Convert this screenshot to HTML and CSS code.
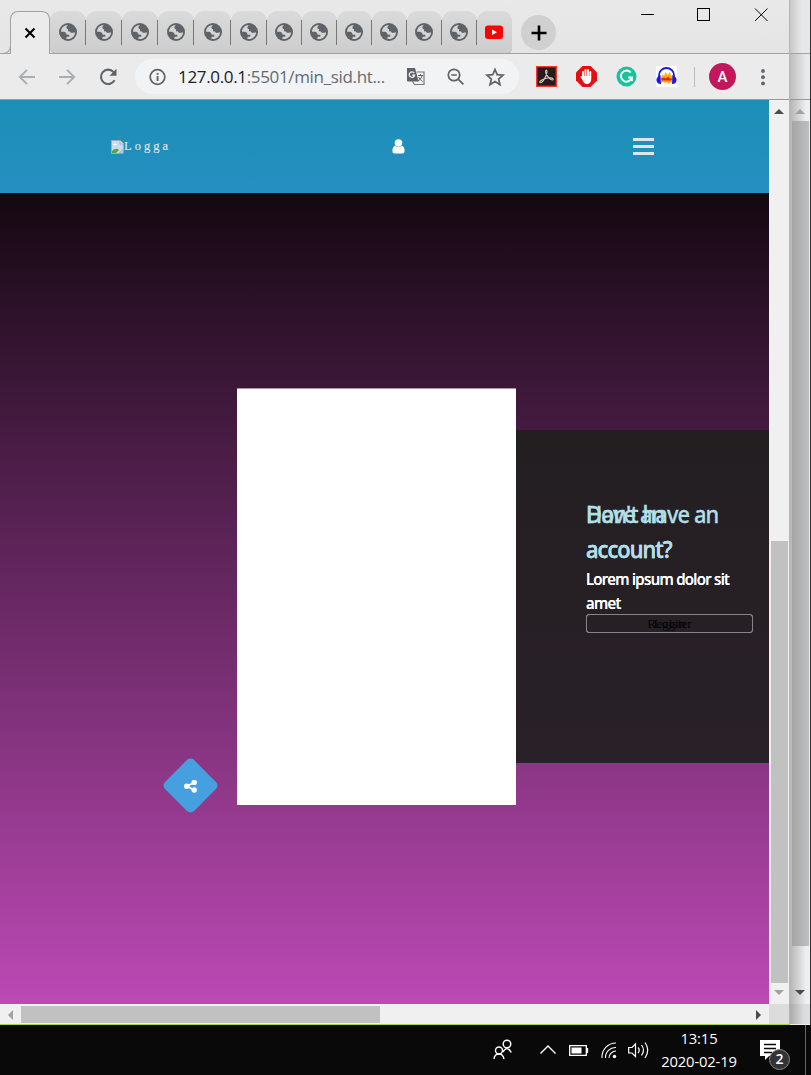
FILE: index.html
```
<!DOCTYPE html>
<html lang="sv">
<head>
<meta charset="utf-8">
<title>min_sid</title>
<link rel="stylesheet" href="styles.css">
</head>
<body>
<svg class="defs" aria-hidden="true">
  <symbol id="globe" viewBox="0 0 18 18"><circle cx="9" cy="9" r="9" fill="#5f6368"/><path d="M2 8.800C2 5 5 2 8.800 2L7.300 4.300Q7.500 6.300 9 6.300V8.300H10.500Q11.500 10 13 10L16 9.200C16 13 13 16 9 16L7.200 15.700 7.800 13.700H10.300V11.700H7.800Q7 8.800 5 8.800Z" fill="#d4d4d4"/></symbol>
</svg>
<div class="desktop">
  <main class="window">
    <header class="tabstrip">
      <div class="edge"></div>
      <div class="tab-active"><svg width="12" height="12" viewBox="0 0 12 12"><path d="M1.5 1.5 10.5 10.5M10.5 1.5 1.5 10.5" stroke="#000" stroke-width="2"/></svg></div>
      <div class="tabs">
        <div class="tab"><svg><use href="#globe"/></svg></div>
        <div class="tab"><svg><use href="#globe"/></svg></div>
        <div class="tab"><svg><use href="#globe"/></svg></div>
        <div class="tab"><svg><use href="#globe"/></svg></div>
        <div class="tab wide"><svg><use href="#globe"/></svg></div>
        <div class="tab"><svg><use href="#globe"/></svg></div>
        <div class="tab slim"><svg><use href="#globe"/></svg></div>
        <div class="tab slim"><svg><use href="#globe"/></svg></div>
        <div class="tab slim"><svg><use href="#globe"/></svg></div>
        <div class="tab slim"><svg><use href="#globe"/></svg></div>
        <div class="tab slim"><svg><use href="#globe"/></svg></div>
        <div class="tab slim"><svg><use href="#globe"/></svg></div>
        <div class="tab slim last"><svg viewBox="0 0 18 18"><rect y="2.500" width="18" height="13.500" rx="3" fill="#f00"/><path d="M7 6.500v5.500l5-2.800z" fill="#fff"/></svg></div>
      </div>
      <div class="newtab"><svg width="16" height="16" viewBox="0 0 16 16"><path d="M8 0.5V15.5M.5 8H15.5" stroke="#000" stroke-width="2.6"/></svg></div>
      <svg class="controls" width="130" height="24" viewBox="0 0 130 24" fill="none" stroke="#000"><path d="M1 10.5H14"/><rect x="57.500" y="4.500" width="12" height="12"/><path d="M115 4.500 127.500 17M127.500 4.500 115 17"/></svg>
    </header>
    <div class="toolbar">
      <svg class="nav" width="100" height="20" viewBox="0 0 100 20" fill="none" stroke="#abadb0" stroke-width="1.9"><path d="M17 10H2M9 2.800 1.800 10 9 17.200M41 10H56M49 2.800 56.200 10 49 17.200"/><path d="M96.500 13.300A7.200 7.200 0 1 1 95.500 5" stroke="#5f6368" stroke-width="2.100"/><path d="M98.500 1.800V8.800H91.500Z" fill="#5f6368" stroke="none"/></svg>
      <div class="omnibox">
        <svg class="info" width="18" height="18" viewBox="0 0 18 18"><circle cx="9.500" cy="9" r="7.300" fill="none" stroke="#5f6368" stroke-width="1.700"/><path d="M8.600 8h1.900v5H8.600zM8.600 5h1.900v1.800H8.600z" fill="#5f6368"/></svg>
        <div class="url"><b>127.0.0.1</b>:5501/min_sid.ht...</div>
        <svg class="tools" width="102" height="20" viewBox="0 0 102 20" fill="none" stroke="#5f6368" stroke-width="1.700"><path d="M10.500 5H18v12.500H8.500l-2-3" stroke="#777a7e" stroke-width="1.200"/><path d="M1 1H9L12.700 14.500H2Q1 14.500 1 13.500Z" fill="#5f6368" stroke="none"/><path d="M8.200 6.100A2.700 2.700 0 1 0 8.600 8.200H6.200" stroke="#f1f3f4" stroke-width="1.300"/><path d="M12 8.500h5M14.500 7v1.500M16 9q-1 3.500-4 5M12.500 10q1.500 3 4 4.500" stroke-width="1"/><circle cx="48" cy="8" r="5.700"/><path d="M45.200 8h5.600M52.400 12.400l5 5"/><path d="M89 2.500 91.200 7.700 97 8.200 92.600 12 94 17.700 89 14.600 84 17.700 85.400 12 81 8.200 86.800 7.700Z"/></svg>
      </div>
      <div class="extensions">
        <svg class="ext" viewBox="0 0 21 21"><rect x=".7" y=".7" width="19.600" height="19.600" fill="#291a1b" stroke="#ee3a25" stroke-width="1.400"/><path d="M4 16.500C2.500 15.200 8 12.500 11.500 12 15 11.300 18 12.500 17 13.700 15.500 15.200 10.800 10.500 9.700 6.500 9 3.800 11.200 3.200 11 6 10.600 10.500 6 18 4 16.500Z" fill="none" stroke="#d8cccc" stroke-width="1.100"/></svg>
        <svg class="ext" viewBox="0 0 21 21"><path d="M6.500 0h8L21 6.500v8L14.500 21h-8L0 14.500v-8Z" fill="#e50f12"/><path d="M7 11V6M9.500 10V4M12 10V4M14.300 11V6M5.500 11l3 4" stroke="#fff" stroke-width="1.900" stroke-linecap="round"/><path d="M6 10H15.200V14Q14.500 18 10.800 18 8 18 6.500 14Z" fill="#fff"/></svg>
        <svg class="ext" viewBox="0 0 21 21"><circle cx="10.500" cy="10.500" r="10" fill="#16c39a"/><path d="M14.800 6.500A5.600 5.600 0 1 0 15.900 11.500H12M15.900 11v4" fill="none" stroke="#fff" stroke-width="1.900"/></svg>
        <svg class="ext" viewBox="0 0 21 21"><path d="M0 0H21V21H0Z" fill="#fff"/><path d="M3 12V9.500a7.500 7.500 0 0 1 15 0V12" fill="none" stroke="#1717eb" stroke-width="1.800"/><path d="M5 12l1.500-4L8 10l1.500-4 2 3L14 6l1 4 1.500-1v8l-2-1-1.500 2-2-2-2 1-2-1-2 1Z" fill="#ffad14"/><path d="M5 12.500l3-1 2 1 2-2 2 2h3l-2 2H6Z" fill="#f0210e"/><path d="M4.500 9Q0 11 .5 14.500 1 18 5 18ZM16.500 9Q21 11 20.500 14.500 20 18 16 18Z" fill="#1717eb"/></svg>
      </div>
      <i class="divider"></i>
      <div class="avatar">A</div>
      <svg class="more" width="6" height="20" viewBox="0 0 6 20" fill="#5f6368"><circle cx="3" cy="4" r="1.900"/><circle cx="3" cy="10.200" r="1.900"/><circle cx="3" cy="16.400" r="1.900"/></svg>
    </div>
    <div class="view">
      <div class="page">
        <nav class="site-header">
          <svg class="broken" width="13" height="14" viewBox="0 0 13 14"><path d="M.5.5H9L12.500 4V9L8 13.500H.5Z" fill="#c8daf5" stroke="#aaa9b0"/><path d="M1 13V11Q5 7 8 10L5 13Z" fill="#54a733"/><path d="M9 .5V4h3.500" fill="#eee" stroke="#aaa9b0"/><path d="M2 5q2-3 4 0Z" fill="#fff"/><path d="M8 13.500 12.500 9V13.500Z" fill="#b9cbd7"/></svg>
          <span class="logo">Logga</span>
          <svg class="user" width="13" height="15" viewBox="0 0 13 15" fill="#fff"><circle cx="6.500" cy="4" r="3.800"/><path d="M3.200 6.800Q6.500 9.600 9.800 6.800 12.600 7.500 12.600 12 12.600 14.600 10.500 14.600H2.500Q.4 14.600.4 12 .4 7.500 3.200 6.800Z"/></svg>
          <div class="burger"><i></i><i></i><i></i></div>
        </nav>
        <section class="stage">
          <div class="share"><svg width="14" height="14" viewBox="0 0 14 14" fill="#fff"><path d="M11 3 3.500 7 11 11" fill="none" stroke="#fff" stroke-width="1.800"/><circle cx="10.700" cy="3.200" r="2.700"/><circle cx="3.200" cy="7" r="2.700"/><circle cx="10.700" cy="10.800" r="2.700"/></svg></div>
          <div class="card"></div>
          <div class="panel">
            <div class="message">
              <h2>Don't have an<br>account?</h2>
              <p>Lorem ipsum dolor sit<br>amet</p>
              <div class="button">Register</div>
            </div>
            <div class="message over">
              <h2>Have an<br>account?</h2>
              <p>Lorem ipsum dolor sit<br>amet</p>
              <div class="button">Login</div>
            </div>
          </div>
        </section>
      </div>
      <div class="vbar"><i class="up dark"></i><b class="thumb"></b><i class="down"></i></div>
      <div class="hbar"><i class="left"></i><b class="thumb"></b><i class="right dark"></i></div>
      <div class="corner"></div>
    </div>
  </main>
  <aside class="behind">
    <div class="behind-top"></div>
    <div class="behind-tools"></div>
    <div class="behind-bar"><i class="up"></i><b class="thumb"></b><i class="down dark"></i></div>
    <div class="behind-corner"></div>
  </aside>
</div>
<footer class="taskbar">
  <svg class="tray" width="160" height="24" viewBox="0 0 160 24" fill="none" stroke="#fff" stroke-width="1.400"><circle cx="14" cy="6" r="3.800"/><path d="M10 14Q14 7 18.300 14.500"/><circle cx="6" cy="12.500" r="3.500"/><path d="M1 21Q1.500 16 6 16 10 16 11 21"/><path d="M47.500 15.500 55 8 62.500 15.500"/><path d="M76.700 7.700H93.300V17.300H76.700ZM94.500 10v5" stroke-width="1.300"/><path d="M78.500 9.500H88.500V15.500H78.500Z" fill="#fff" stroke="none"/><path d="M109 20A14 14 0 0 1 123 5M112.500 20A10 10 0 0 1 123 9.500M116 20A7 7 0 0 1 123 13" stroke-width="1.100"/><circle cx="121.500" cy="18.500" r="1.700" fill="#fff" stroke="none"/><path d="M135.700 9.500H139L142.500 6V18.500L139 15H135.700ZM145 9.500Q147.500 12 145 15M148.500 7Q152.500 12 148.500 17.500M152 4.500Q157.500 12 152 20" stroke-width="1.200"/></svg>
  <div class="clock"><span>13:15</span><span>2020-02-19</span></div>
  <div class="notices"><svg width="20" height="20" viewBox="0 0 20 20"><path d="M0 0H20V16H9L5 20V16H0Z" fill="#fff"/><path d="M4 4.500H16M4 8.500H16M4 12.500H12" stroke="#090909" stroke-width="1.300"/></svg><span class="count">2</span></div>
  <div class="show-desktop"></div>
</footer>
</body>
</html>
```

FILE: styles.css
```
* { box-sizing: border-box; }
body { margin: 0; width: 811px; height: 1075px; overflow: hidden; background: #090909; font-family: "Open Sans", sans-serif; }
.defs { display: none; }
svg { display: block; flex: none; }
.desktop { display: flex; height: 1025px; }
.window { width: 790px; border-right: 1px solid #a9cf52; border-bottom: 1px solid #a5d846; display: flex; flex-direction: column; background: #e8e8e8; }

.tabstrip { height: 54px; display: flex; align-items: flex-end; background: linear-gradient(#e9e9e9, #e4e4e4); flex: none; box-shadow: inset 0 -1px #a2a2a2; }
.edge { width: 11px; height: 8px; border-right: 1px solid #a2a2a2; border-bottom: 1px solid #a2a2a2; border-bottom-right-radius: 8px; }
.tab-active { width: 40px; height: 43px; margin-left: -1px; border: 1px solid #a2a2a2; border-bottom: 0; border-radius: 8px 8px 0 0; background: #ebebeb; display: grid; place-items: center; }
.tabs { display: flex; height: 43px; }
.tab { width: 36px; height: 42px; background: linear-gradient(#dadada, #cdcdcd); border-radius: 10px 10px 0 0; display: flex; align-items: center; padding-left: 9px; box-shadow: 0 1px #a2a2a2; }
.tab svg { width: 18px; height: 18px; }
.tab::after { content: ""; width: 1px; height: 25px; margin-left: 8px; background: #777; flex: none; }
.tab:first-child { border-bottom-left-radius: 7px; }
.wide { width: 37px; padding-left: 10px; }
.slim { width: 35px; padding-left: 8px; }
.last { border-bottom-right-radius: 6px; }
.last::after { display: none; }
.newtab { width: 35px; height: 35px; border-radius: 50%; background: #d0d0d0; display: grid; place-items: center; margin: 0 0 4px 9px; }
.controls { margin: 4px 19px 0 auto; align-self: flex-start; }

.toolbar { height: 46px; display: flex; align-items: center; background: #ebebeb; border-bottom: 1px solid #999; flex: none; padding-left: 18px; }
.omnibox { width: 384px; height: 35px; margin-left: 17px; border-radius: 18px; background: #f1f3f4; display: flex; align-items: center; padding-left: 13px; }
.url { width: 214px; margin-left: 12px; color: #656a70; font-size: 17px; letter-spacing: -.340px; white-space: nowrap; }
.url b { font-weight: 400; color: #202124; }
.tools { margin-left: 14px; }
.extensions { display: flex; gap: 19px; margin-left: 17px; }
.ext { width: 21px; height: 21px; }
.divider { width: 1px; height: 20px; background: #bbb; margin-left: 17px; }
.avatar { width: 27px; height: 27px; margin-left: 14px; border-radius: 50%; background: #c2185b; color: #fff; display: grid; place-items: center; font: 500 15px Roboto, sans-serif; }
.more { margin-left: 24px; }

.view { flex: 1; display: grid; grid-template: 904px 20px / 769px 20px; }
.page { display: flex; flex-direction: column; }
.site-header { height: 93px; display: flex; align-items: center; padding-left: 111px; background: linear-gradient(#1c8fb7, #258fc1); }
.logo { width: 268px; font: 12.500px "Liberation Serif", serif; letter-spacing: 3px; color: #dde3e5; -webkit-text-stroke: .2px #dde3e5; }
.burger { width: 21px; margin-left: 228px; display: flex; flex-direction: column; gap: 4px; }
.burger i { height: 3px; background: #e2e3e4; }
.stage { flex: 1; display: grid; grid-template-columns: 237px 279px 253px; background: linear-gradient(#140811, #bc49b5); align-items: start; }
.share { width: 41px; height: 41px; border-radius: 5px; background: #469fdf; transform: rotate(45deg); display: grid; place-items: center; margin: 572px 0 0 170px; }
.share svg { transform: rotate(-45deg); }
.card { height: 417px; background: #fff; margin-top: 195px; border-top: 1px solid #a597a7; }
.panel { height: 333px; margin-top: 237px; position: relative; background: linear-gradient(#231f21, #292028); padding: 67px 16px 0 70px; color: #fff; white-space: nowrap; }
.over { position: absolute; inset: 67px 16px auto 70px; }
h2 { margin: 0; color: #b0dfe5; font: 500 24px/35px "Noto Sans", "Open Sans", sans-serif; letter-spacing: -1px; transform: translateY(-1px) scaleX(.91); transform-origin: left; -webkit-text-stroke: .3px #b0dfe5; }
p { margin: 0; font: 500 15.500px/24px "Noto Sans", "Open Sans", sans-serif; letter-spacing: -.700px; transform: scaleX(.97); transform-origin: left; }
.button { margin-top: -1px; height: 19px; border: 1px solid #88858a; border-radius: 3px; color: #050405; text-align: center; font: 13.330px/17px "Liberation Serif", serif; }

.vbar, .behind-bar { background: #f0f0f0; display: flex; flex-direction: column; align-items: center; }
.vbar { padding: 9px 0 9px; }
.vbar .thumb { width: 17px; height: 442px; margin: 427px 0 0 1px; background: #c1c1c1; }
.vbar .down, .behind-bar .down { margin-top: auto; }
.hbar { background: #f0f0f0; display: flex; align-items: center; padding: 1px 8px 0 8px; }
.hbar .thumb { width: 359px; height: 17px; margin-left: 8px; background: #c1c1c1; }
.up, .down, .left, .right { width: 0; height: 0; color: #a2a2a2; border: 5px solid transparent; }
.dark { color: #4b4b4b; }
.up { border-top: 0; border-bottom-color: currentColor; }
.down { border-bottom: 0; border-top-color: currentColor; }
.left { border-left: 0; border-right-color: currentColor; }
.right { border-right: 0; border-left-color: currentColor; margin-left: auto; }
.corner { background: #dcdcdc; }

.behind { width: 21px; display: flex; flex-direction: column; border-right: 1px solid #303134; background: #eee; }
.behind-top { height: 54px; border-bottom: 1px solid #a2a2a2; background: linear-gradient(90deg, #c9c9c9, #e8e8e8 60%); }
.behind-tools { height: 46px; border-bottom: 1px solid #999; background: linear-gradient(90deg, #bdbdbd, #e9e9e9 80%); }
.behind-bar { height: 904px; padding: 9px 0 9px; background: linear-gradient(90deg, #b5b5b5, #efefef 80%); }
.behind-bar .thumb { width: 17px; height: 825px; margin: 7px 0 0 1px; background: linear-gradient(90deg, #a5a5a5, #bfbfbf); }
.behind-corner { height: 20px; background: linear-gradient(90deg, #aaa, #dcdcdc 70%); }

.taskbar { height: 50px; display: flex; align-items: center; padding-left: 493px; background: #090909; color: #fff; }
.clock { width: 90px; margin-left: 1px; display: flex; flex-direction: column; text-align: center; font-size: 14.800px; line-height: 23px; letter-spacing: -.150px; }
.notices { margin-left: 16px; position: relative; }
.count { position: absolute; left: 9px; top: 9px; width: 21px; height: 21px; border: 1px solid #888; border-radius: 50%; background: #333; text-align: center; font: 600 14px/18px "Open Sans", sans-serif; }
.show-desktop { width: 1px; height: 50px; background: #666; margin-left: auto; margin-right: 5px; }
```
